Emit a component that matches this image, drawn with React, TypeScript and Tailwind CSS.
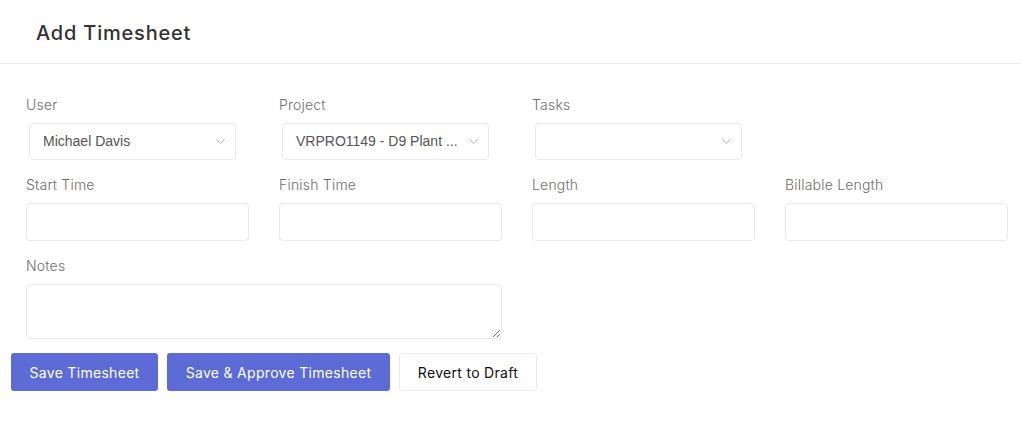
import { ChevronDown } from "lucide-react";

const font = { fontFamily: "Inter, 'Open Sans', sans-serif" };

const Label = ({ text }: { text: string }) => (
  <label className="block h-[20px] text-[14px] font-light leading-[20px] tracking-[0.2px] text-[#6e6e6e]">
    {text}
  </label>
);

const Select = ({ value }: { value: string }) => (
  <div className="mx-[3px] mt-[8px] flex h-[37px] w-[207px] items-center justify-between rounded-[4px] border border-[#e8e8f0] bg-white pl-[13px] pr-[7px]">
    <span className="whitespace-nowrap font-['Liberation_Sans',sans-serif] text-[14px] text-[#555]">
      {value}
    </span>
    <ChevronDown size={15} strokeWidth={1} className="ml-[2px] shrink-0 text-[#777]" />
  </div>
);

const Input = () => (
  <div className="mt-[8px] h-[38px] rounded-[4px] border border-[#e8e8f0] bg-white" />
);

const App = () => {
  return (
    <div className="min-h-[421px] w-[1021px] bg-white" style={font}>
      <div className="flex h-[64px] items-center border-b border-[#e9e9ee] px-[36px] pt-[3px]">
        <h1 className="text-[20px] font-medium tracking-[0.8px] text-[#333]">Add Timesheet</h1>
      </div>

      <div className="pl-[26px] pr-[13px] pt-[31px]">
        <div className="grid grid-cols-4 gap-x-[30px]">
          <div>
            <Label text="User" />
            <Select value="Michael Davis" />
          </div>
          <div>
            <Label text="Project" />
            <Select value="VRPRO1149 - D9 Plant ..." />
          </div>
          <div>
            <Label text="Tasks" />
            <Select value="" />
          </div>
          <div />
        </div>

        <div className="mt-[15px] grid grid-cols-4 gap-x-[30px]">
          {["Start Time", "Finish Time", "Length", "Billable Length"].map((l) => (
            <div key={l}>
              <Label text={l} />
              <Input />
            </div>
          ))}
        </div>

        <div className="mt-[15px] grid grid-cols-4 gap-x-[30px]">
          <div className="col-span-2">
            <Label text="Notes" />
            <textarea className="mt-[8px] block h-[55px] w-full resize-y rounded-[4px] border border-[#e8e8f0] bg-white" />
          </div>
        </div>
      </div>

      <div className="mt-[14px] flex gap-[9px] pl-[11px]">
        <button className="h-[38px] w-[147px] rounded-[3px] bg-[#5c6bd6] text-[14px] tracking-[0.3px] text-white">
          Save Timesheet
        </button>
        <button className="h-[38px] w-[223px] rounded-[3px] bg-[#5c6bd6] text-[14px] tracking-[0.3px] text-white">
          Save &amp; Approve Timesheet
        </button>
        <button className="h-[38px] w-[138px] rounded-[3px] border border-[#e8e8f0] bg-white text-[14px] tracking-[0.3px] text-[#111]">
          Revert to Draft
        </button>
      </div>
    </div>
  );
};

export default App;
